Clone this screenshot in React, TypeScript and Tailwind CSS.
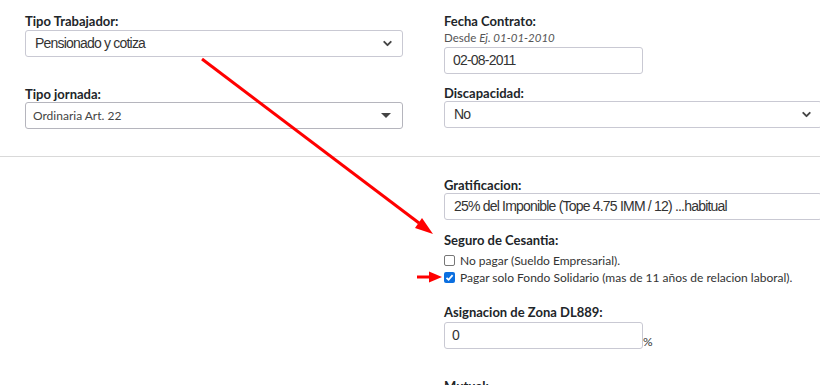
import { ChevronDown } from "lucide-react";

const label = "block h-[16px] text-[13px] leading-[16px] font-bold text-[#212529] font-['Lato','Liberation_Sans',sans-serif]";
const field =
  "flex items-center h-[27px] border border-[#c9c9d3] rounded-[3px] bg-white text-[14px] tracking-[-0.8px] text-[#333] font-['Liberation_Sans',Arial,sans-serif]";

function NativeSelect({ value, w }: { value: string; w: string }) {
  return (
    <div className={`${field} ${w} pl-[9px] pr-[8px] justify-between`}>
      <span>{value}</span>
      <ChevronDown size={13} strokeWidth={3.5} className="text-[#444]" />
    </div>
  );
}

function Check({ checked, text }: { checked?: boolean; text: string }) {
  return (
    <div className="flex items-center h-[17px] gap-[5px] text-[12px] text-[#333] font-['Lato','Liberation_Sans',sans-serif]">
      {checked ? (
        <span className="flex items-center justify-center w-[11px] h-[11px] rounded-[2px] bg-[#0b6fe0]">
          <svg width="9" height="9" viewBox="0 0 9 9">
            <path d="M1.5 4.8 L3.6 6.8 L7.6 2.2" fill="none" stroke="white" strokeWidth="1.8" />
          </svg>
        </span>
      ) : (
        <span className="w-[11px] h-[11px] rounded-[2px] border border-[#777] bg-white" />
      )}
      <span>{text}</span>
    </div>
  );
}

export default function App() {
  return (
    <div className="relative w-[820px] h-[385px] overflow-hidden bg-white">
      <div className="grid grid-cols-[378px_378px] gap-x-[41px] pl-[25px] pt-[13px]">
        <div>
          <span className={label}>Tipo Trabajador:</span>
          <div className="mt-[1px]">
            <NativeSelect value="Pensionado y cotiza" w="w-[378px]" />
          </div>
          <span className={`${label} mt-[29px]`}>Tipo jornada:</span>
          <div className="flex items-center justify-between h-[27px] w-[378px] border border-[#b5b5bd] rounded-[3px] pl-[7px] pr-[11px] text-[12px] text-[#444] font-['Lato','Liberation_Sans',sans-serif]">
            <span>Ordinaria Art. 22</span>
            <span className="w-0 h-0 border-l-[5px] border-r-[5px] border-t-[5px] border-l-transparent border-r-transparent border-t-[#444]" />
          </div>
        </div>
        <div>
          <span className={label}>Fecha Contrato:</span>
          <div className="h-[18px] leading-[18px] text-[11.5px] text-[#555] font-['Lato','Liberation_Sans',sans-serif]">
            Desde <i>Ej. 01-01-2010</i>
          </div>
          <div className={`${field} w-[199px] pl-[8px]`}>02-08-2011</div>
          <span className={`${label} mt-[11px]`}>Discapacidad:</span>
          <NativeSelect value="No" w="w-[378px]" />
        </div>
      </div>

      <div className="mt-[27px] h-px bg-[#d9d9d9]" />

      <div className="grid grid-cols-[378px_378px] gap-x-[41px] pl-[25px] pt-[20px]">
        <div />
        <div>
          <span className={label}>Gratificacion:</span>
          <div className={`${field} w-[378px] pl-[9px]`}>25% del Imponible (Tope 4.75 IMM / 12) ...habitual</div>
          <span className={`${label} mt-[12px]`}>Seguro de Cesantia:</span>
          <div className="mt-[4px]">
            <Check text="No pagar (Sueldo Empresarial)." />
            <Check checked text="Pagar solo Fondo Solidario (mas de 11 años de relacion laboral)." />
          </div>
          <span className={`${label} mt-[18px]`}>Asignacion de Zona DL889:</span>
          <div className="flex items-end mt-[2px]">
            <div className={`${field} h-[26px] w-[199px] pl-[7px]`}>0</div>
            <span className="text-[12px] leading-[12px] text-[#333] mb-[1px] font-['Lato','Liberation_Sans',sans-serif]">%</span>
          </div>
          <span className={`${label} mt-[29px]`}>Mutual:</span>
        </div>
      </div>

      <svg className="absolute left-0 top-0 pointer-events-none" width="820" height="385">
        <line x1="202" y1="59" x2="419" y2="223" stroke="#ff0000" strokeWidth="3" />
        <polygon points="433,234 415,228 422,218" fill="#ff0000" />
        <line x1="417" y1="277" x2="430" y2="277" stroke="#ff0000" strokeWidth="3" />
        <polygon points="442,277 429,271.5 429,282.5" fill="#ff0000" />
      </svg>
    </div>
  );
}
